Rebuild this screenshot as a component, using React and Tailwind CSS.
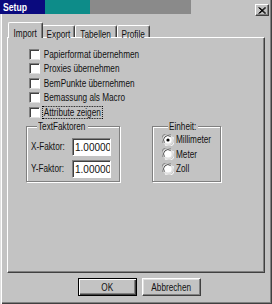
import React from 'react';

// dialog text is narrower than Liberation Sans, squeeze it horizontally
const T = ({ children, center, className = '' }) => (
  <span
    className={`inline-block whitespace-nowrap scale-x-[0.82] ${center ? 'origin-center' : 'origin-left'} ${className}`}
  >
    {children}
  </span>
);

const Check = ({ label, focused }) => (
  <div className="flex items-center h-[14.5px]">
    <div className="w-[11px] h-[11px] bg-white border border-t-[#808080] border-l-[#808080] border-r-white border-b-[#dfdfdf] shadow-[inset_1px_1px_0_#404040]" />
    <T className={`ml-[3px] px-[1px] leading-[11px] ${focused ? 'outline-1 outline-dotted outline-black' : ''}`}>
      {label}
    </T>
  </div>
);

const Radio = ({ label, checked }) => (
  <div className="flex items-center h-[14.5px]">
    <svg width="12" height="12" viewBox="0 0 12 12" className="shrink-0">
      <circle cx="6" cy="6" r="5.5" fill="#dfdfdf" />
      <path d="M1.2 9 A5.5 5.5 0 0 1 9 1.2" stroke="#808080" strokeWidth="1" fill="none" />
      <path d="M2.5 8.5 A4.3 4.3 0 0 1 8.5 2.5" stroke="#404040" strokeWidth="1" fill="none" />
      <path d="M3 10.8 A5.5 5.5 0 0 0 10.8 3" stroke="#ffffff" strokeWidth="1" fill="none" />
      <circle cx="6" cy="6" r="3.6" fill="#ffffff" />
      {checked && <circle cx="6" cy="6" r="1.6" fill="#000" />}
    </svg>
    <T className="ml-[2px]">{label}</T>
  </div>
);

const Field = ({ label, value }) => (
  <div className="flex items-center h-[18px]">
    <div className="w-[41px] whitespace-nowrap">
      <T>{label}</T>
    </div>
    <div className="w-[39px] h-[18px] bg-white border border-t-[#808080] border-l-[#808080] border-r-white border-b-white shadow-[inset_1px_1px_0_#404040] overflow-hidden whitespace-nowrap pl-[2px] pt-[2px] leading-[13px] text-[10px] font-['Liberation_Sans',Arial,sans-serif]">
      {value}
    </div>
  </div>
);

const Tab = ({ label, w, active }) =>
  active ? (
    <div
      className={`relative z-10 ${w} h-[16px] -mr-[1px] bg-[#c3c3c3] border-t border-l border-white border-r border-r-[#404040] rounded-t-[2px] shadow-[inset_-1px_0_0_#808080] flex justify-center pt-[3px]`}
    >
      <T center>{label}</T>
    </div>
  ) : (
    <div
      className={`${w} h-[13px] bg-[#c3c3c3] border-t border-l border-white border-r border-r-[#404040] rounded-t-[2px] shadow-[inset_-1px_0_0_#808080] flex justify-center pt-[1px]`}
    >
      <T center>{label}</T>
    </div>
  );

const Button = ({ label, primary }) => (
  <div
    className={`w-[59px] h-[18px] flex items-center justify-center bg-[#c3c3c3] ${
      primary
        ? 'border border-black shadow-[inset_1px_1px_0_#fff,inset_-1px_-1px_0_#404040,inset_-2px_-2px_0_#808080]'
        : 'border border-t-white border-l-white border-r-[#404040] border-b-[#404040] shadow-[inset_-1px_-1px_0_#808080,inset_1px_1px_0_#dfdfdf]'
    }`}
  >
    <T center>{label}</T>
  </div>
);

export default function App() {
  return (
    <div className="w-[272px] h-[304px] bg-[#c3c3c3] text-[10px] text-[#111] font-['Liberation_Sans',Arial,sans-serif] shadow-[inset_1px_0_0_#dfdfdf,inset_2px_0_0_#ffffff,inset_-1px_-1px_0_#404040,inset_-2px_-2px_0_#808080] flex flex-col overflow-hidden">
      {/* title bar */}
      <div className="flex items-start h-[16px]">
        <div className="w-[45px] h-[14px] bg-[#0a0a7e] text-white font-bold text-[10.5px] leading-[14px] pl-[3px]">
          <T>Setup</T>
        </div>
        <div className="w-[45px] h-[14px] bg-[#0d8c89]" />
        <div className="w-[101px] h-[14px] bg-[#8a8a8a]" />
        <div className="flex-1" />
        <div className="mt-[4px] mr-[3px] w-[14px] h-[12px] bg-[#c3c3c3] border border-t-white border-l-white border-r-[#404040] border-b-[#404040] shadow-[inset_-1px_-1px_0_#808080] flex items-center justify-center">
          <svg width="8" height="7" viewBox="0 0 8 7">
            <path d="M0.5 0.5 L7 6.5 M1.5 0.5 L8 6.5 M7 0.5 L0.5 6.5 M8 0.5 L1.5 6.5" stroke="#000" strokeWidth="1" />
          </svg>
        </div>
      </div>

      {/* tabs */}
      <div className="flex items-end mt-[6px] pl-[8px] h-[16px]">
        <Tab label="Import" w="w-[35px]" active />
        <Tab label="Export" w="w-[33px]" />
        <Tab label="Tabellen" w="w-[42px]" />
        <Tab label="Profile" w="w-[33px]" />
      </div>

      {/* panel */}
      <div className="-mt-[1px] ml-[7px] w-[258px] h-[236px] border-t border-l border-white border-r border-b border-r-[#404040] border-b-[#404040] shadow-[inset_-1px_-1px_0_#808080] pt-[9px]">
        <div className="pl-[21px]">
          <Check label="Papierformat übernehmen" />
          <Check label="Proxies übernehmen" />
          <Check label="BemPunkte übernehmen" />
          <Check label="Bemassung als Macro" />
          <Check label="Attribute zeigen" focused />
        </div>

        <div className="flex items-start pl-[18px] mt-[1px]">
          <fieldset className="w-[94px] h-[61px] border border-[#808080] shadow-[1px_1px_0_#ffffff,inset_1px_1px_0_#ffffff] pl-[4px] pt-[5px] flex flex-col gap-[4px]">
            <legend className="ml-[6px] px-[1px] leading-[12px] bg-[#c3c3c3] w-[51px]">
              <T>TextFaktoren</T>
            </legend>
            <Field label="X-Faktor:" value="1.000000" />
            <Field label="Y-Faktor:" value="1.000000" />
          </fieldset>

          <fieldset className="ml-[32px] w-[69px] h-[61px] border border-[#808080] shadow-[1px_1px_0_#ffffff,inset_1px_1px_0_#ffffff] pl-[9px] pt-0">
            <legend className="ml-[6px] px-[1px] leading-[12px] bg-[#c3c3c3] w-[30px]">
              <T>Einheit:</T>
            </legend>
            <Radio label="Millimeter" checked />
            <Radio label="Meter" />
            <Radio label="Zoll" />
          </fieldset>
        </div>
      </div>

      {/* buttons */}
      <div className="flex mt-[5px] pl-[78px] gap-[5px]">
        <Button label="OK" primary />
        <Button label="Abbrechen" />
      </div>
    </div>
  );
}
